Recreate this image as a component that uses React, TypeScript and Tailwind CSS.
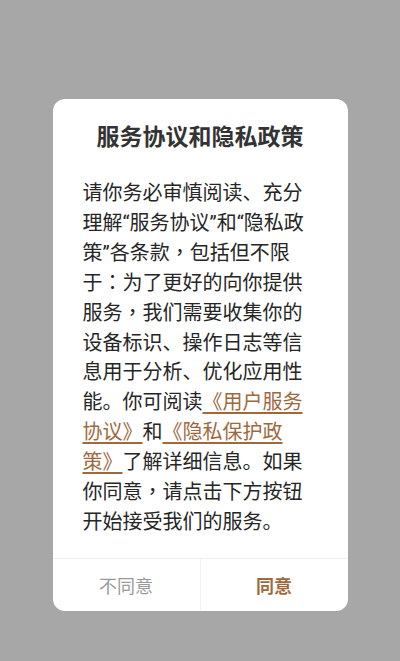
export default function App() {
  const font = { fontFamily: '"Roboto", "Noto Sans CJK SC", sans-serif' };
  const P = ({ c }: { c: string }) => (
    <span className="leading-[0]" style={{ fontFamily: '"Noto Sans CJK TC", sans-serif' }}>
      {c}
    </span>
  );
  return (
    <div
      className="min-h-[661px] w-full bg-[#a7a7a7] flex justify-center items-start pt-[99px]"
      style={font}
    >
      <div className="w-[295px] h-[512px] bg-white rounded-[12px] flex flex-col overflow-hidden">
        <h1 className="mt-[24px] h-[30px] text-center text-[23px] leading-[30px] font-bold text-[#333333]">
          服务协议和隐私政策
        </h1>
        <p className="mt-[26px] ml-[30px] w-[223px] text-[20px] leading-[29.9px] text-[#262626]">
          请你务必审慎阅读、充分理解“服务协议”和“隐私政策”各条款<P c="，" />包括但不限于<P c="：" />为了更好的向你提供服务<P c="，" />我们需要收集你的设备标识、操作日志等信息用于分析、优化应用性能。你可阅读
          <span className="text-[#a0693d] underline underline-offset-[3px]">《用户服务协议》</span>和
          <span className="text-[#a0693d] underline underline-offset-[3px]">《隐私保护政策》</span>
          了解详细信息。如果你同意<P c="，" />请点击下方按钮开始接受我们的服务。
        </p>
        <div className="flex-1" />
        <div className="h-[53px] flex border-t border-[#f0f0f0]">
          <button className="flex-1 flex items-center justify-center pt-[3px] text-[18px] text-[#9a9a9a] border-r border-[#f2f2f2]">
            不同意
          </button>
          <button className="flex-1 flex items-center justify-center pt-[3px] text-[18px] font-bold text-[#a0693d]">
            同意
          </button>
        </div>
      </div>
    </div>
  );
}
